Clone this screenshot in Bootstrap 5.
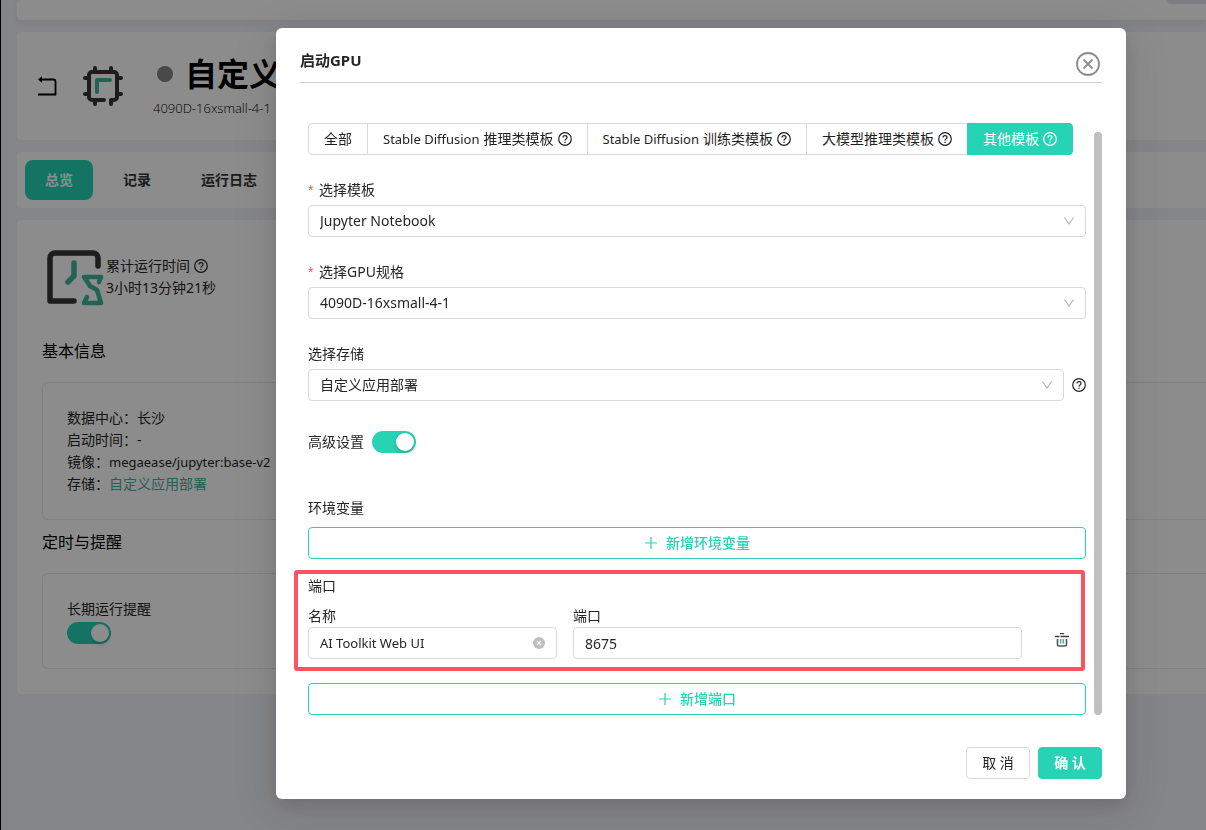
<!DOCTYPE html>
<html lang="zh-CN">
<head>
<meta charset="utf-8">
<meta name="viewport" content="width=device-width, initial-scale=1">
<title>启动GPU</title>
<link href="https://cdn.jsdelivr.net/npm/bootstrap@5.3.0/dist/css/bootstrap.min.css" rel="stylesheet">
<style>
:root { --brand: #26d3b5; --line: #d9d9d9; --ink: #262626; }
body { font-family: "Noto Sans", "Noto Sans CJK SC", sans-serif; font-size: 14px; line-height: 22px; color: var(--ink); background: #f1f2f8; overflow: hidden; }
button, input, select { font-family: inherit; }
svg { flex: none; }
.latin { font-size: 13px; }
.page { min-height: 100vh; border-left: 1px solid #000; padding-left: 16px; gap: 12px; }
.panel { background: #fff; border-radius: 4px 0 0 4px; }
.topbar { height: 20px; box-shadow: 0 2px 6px rgba(0,20,80,.06); }
.topbar-chip { width: 39px; height: 4px; background: #e6e6ea; border-bottom-left-radius: 4px; }
.hero { height: 108px; padding-left: 20px; }
.hero h1 { font-size: 32px; line-height: 44px; font-weight: 700; color: #000; }
.hero-name { gap: 12px; }
.hero-sub { font-family: "Open Sans", sans-serif; font-weight: 300; color: #000; font-size: 13px; line-height: 24px; }
.state-dot { width: 16px; height: 16px; border-radius: 50%; background: #858585; }
.tabs-row { padding: 8px; gap: 10px; }
.tab-btn { height: 40px; padding: 0 20px; border: 0; border-radius: 8px; font-size: 14px; font-weight: 700; background: none; color: #333; }
.tab-btn.current { background: var(--brand); color: #fff; }
.overview { padding: 30px 0 25px 25px; }
.overview h2 { font-size: 16px; line-height: 24px; font-weight: 400; color: #000; margin: 0 0 19px; }
.runtime { padding-left: 4px; margin-bottom: 33px; }
.runtime-text { padding-bottom: 2px; }
.info-box { border: 1px solid #e8e8e8; border-right: 0; border-radius: 6px 0 0 6px; padding: 24px; }
.overview .info-box + h2 { padding-top: 10px; }
.info-box .toggle { margin-top: 2px; }
.text-brand { color: #41b49c; }
.shade { background: rgba(0,0,0,.45); z-index: 1050; }
.gpu-dialog { max-width: 850px; margin: 28px 80px 28px auto; }
.gpu-dialog .modal-content { border: 0; border-radius: 6px; color: var(--ink); box-shadow: 0 6px 16px rgba(0,0,0,.12), 0 9px 48px 12px rgba(0,0,0,.08); }
.gpu-head { margin: 0 24px; height: 55px; padding: 10px 0 0; border-color: #d0d0d0; border-radius: 0; }
.gpu-head h2 { font-size: 15px; line-height: 24px; font-weight: 700; }
.close-btn { padding: 0; border: 0; background: none; line-height: 0; margin: 8px 2px 0 0; color: #8c8c8c; }
.gpu-body { padding: 40px 24px 0 32px; gap: 8px; }
.scroll-thumb { width: 8px; flex: none; margin-top: 9px; background: #bfbfbf; border-radius: 4px; }
.type-btn { height: 32px; padding: 0 15px; border: 1px solid var(--line); background: #fff; font-size: 14px; line-height: 22px; color: #1f1f1f; display: inline-flex; align-items: center; gap: 4px; white-space: nowrap; }
.type-btn + .type-btn { margin-left: -1px; }
.type-btn:first-child { border-radius: 4px 0 0 4px; }
.type-btn:last-child { border-radius: 0 4px 4px 0; background: var(--brand); border-color: var(--brand); color: #fff; }
.field-block { margin-top: 24px; }
.field-block label { display: block; margin-bottom: 4px; }
.req { display: inline-block; width: 11px; color: #ff4d4f; font-family: "Liberation Sans", sans-serif; }
.gpu-body .form-select, .gpu-body .form-control { height: 32px; padding: 4px 11px; font-size: 14px; line-height: 22px; border: 1px solid var(--line); border-radius: 4px; color: var(--ink); }
.gpu-body .form-control.latin { font-size: 13px; }
.gpu-body .form-select { background-image: url("data:image/svg+xml,%3Csvg xmlns='http://www.w3.org/2000/svg' viewBox='0 0 12 12' fill='none' stroke='%23b4b4b4' stroke-width='1.200'%3E%3Cpath d='M1.500 2.500 6 9l4.500-6.500'/%3E%3C/svg%3E"); background-size: 12px 12px; background-position: right 10px center; }
.toggle { appearance: none; width: 44px; height: 22px; border-radius: 11px; background: var(--brand); margin: 0; flex: none; display: block; position: relative; }
.toggle::after { content: ""; position: absolute; top: 2px; right: 2px; width: 18px; height: 18px; border-radius: 50%; background: #fff; box-shadow: 0 2px 4px rgba(0,35,11,.2); }
.advanced { margin-top: 30px; }
.env-block { margin-top: 44px; }
.add-btn { width: 100%; height: 32px; border: 1px solid var(--brand); border-radius: 4px; background: #fff; color: var(--brand); font-size: 14px; font-weight: 500; gap: 8px; padding: 0; }
.port-group { margin: 11px 0 12px; padding: 5px 0 12px; }
.port-frame { inset: 0 1px 0 -14px; border: 4px solid #ff5263; border-radius: 3px; pointer-events: none; }
.name-col { flex: 249 1 0; }
.port-col { flex: 449 1 0; }
.trash-btn { width: 48px; height: 32px; padding: 0 0 6px; border: 0; background: none; text-align: center; line-height: 0; }
.clear-btn { right: 12px; top: 10px; padding: 0; border: 0; background: none; line-height: 0; }
.gpu-foot { padding: 32px 24px 20px; gap: 8px; }
.foot-btn { width: 64px; height: 32px; padding: 0; font-size: 14px; border: 1px solid var(--line); border-radius: 4px; background: #fff; color: var(--ink); }
.foot-btn.ok { background: var(--brand); border-color: var(--brand); color: #fff; font-weight: 700; }
</style>
</head>
<body>
<svg width="0" height="0" class="position-absolute" aria-hidden="true">
  <symbol id="ask" viewBox="0 0 14 14"><g fill="none" stroke="currentColor" stroke-width="1.200"><circle cx="7" cy="7" r="6.300"/><path d="M5 5.600C5 4.300 5.900 3.700 7 3.700s2 .7 2 1.800c0 1.500-2 1.500-2 3" /></g><circle cx="7" cy="10.200" r=".75" fill="currentColor"/></symbol>
  <symbol id="plus" viewBox="0 0 14 14"><path d="M7 1v12M1 7h12" stroke="currentColor" stroke-width="1.200"/></symbol>
</svg>

<main class="page d-flex flex-column">
  <div class="panel topbar d-flex justify-content-end"><div class="topbar-chip"></div></div>
  <header class="panel hero d-flex align-items-center">
    <svg width="20" height="20" viewBox="0 0 20 20" fill="none" stroke="#000" stroke-width="1.800"><path d="M3 3.500h13.500a2 2 0 0 1 2 2V18.500H1"/><path d="M1 3.500 5 .3v6.400z" fill="#000" stroke="none"/></svg>
    <svg class="ms-4" width="44" height="44" viewBox="0 0 44 44" fill="none" stroke="#363636" stroke-width="4" stroke-linecap="round" stroke-linejoin="round"><path d="M23 36H11a3 3 0 0 1-3-3V11a3 3 0 0 1 3-3h22a3 3 0 0 1 3 3v22a3 3 0 0 1-3 3h-3"/><path d="M14 7V4M30 7V4M14 37v3M30 37v3M7 14H4M7 30H4M37 14h3M37 30h3"/><path d="M16 28V16h13" stroke="#41b49c"/></svg>
    <div class="ms-4 ps-1">
      <div class="hero-name d-flex align-items-center text-nowrap ps-1"><span class="state-dot"></span><h1 class="m-0">自定义</h1></div>
      <div class="hero-sub">4090D-16xsmall-4-1</div>
    </div>
  </header>
  <nav class="panel tabs-row d-flex">
    <button class="tab-btn current">总览</button>
    <button class="tab-btn">记录</button>
    <button class="tab-btn">运行日志</button>
  </nav>
  <section class="panel overview">
    <div class="runtime d-flex align-items-center">
      <svg width="60" height="56" viewBox="0 0 60 56" fill="none" stroke-linecap="round" stroke-linejoin="round"><path d="M52 16V8a5 5 0 0 0-5-5H9a5 5 0 0 0-5 5v43h24" stroke="#363636" stroke-width="5.500"/><g stroke="#41b49c"><path d="M28 13v13l-6 6" stroke-width="5.500"/><path d="M53 32l2-5H38l6 9 7 4 4 13H38l3-6" stroke-width="4.600"/></g></svg>
      <div class="runtime-text">
        <div class="d-flex align-items-center gap-1">累计运行时间 <svg width="14" height="14"><use href="#ask"/></svg></div>
        <div>3小时13分钟21秒</div>
      </div>
    </div>
    <h2>基本信息</h2>
    <div class="info-box">
      <div>数据中心：长沙</div>
      <div>启动时间：-</div>
      <div>镜像：<span class="latin">megaease/jupyter:base-v2</span></div>
      <div>存储：<a href="#" class="text-brand text-decoration-none">自定义应用部署</a></div>
    </div>
    <h2>定时与提醒</h2>
    <div class="info-box">
      <label for="remind" class="d-block">长期运行提醒</label>
      <input id="remind" class="toggle" type="checkbox" role="switch" checked>
    </div>
  </section>
</main>

<div class="modal d-block shade" tabindex="-1" role="dialog" aria-labelledby="dlgTitle">
  <div class="modal-dialog gpu-dialog">
    <div class="modal-content">
      <div class="modal-header gpu-head">
        <h2 id="dlgTitle" class="m-0">启动GPU</h2>
        <button class="close-btn" aria-label="关闭"><svg width="24" height="24" viewBox="0 0 24 24" fill="none" stroke="currentColor" stroke-width="1.800"><circle cx="12" cy="12" r="11"/><path d="M7.500 7.500l9 9M16.500 7.500l-9 9"/></svg></button>
      </div>
      <div class="gpu-body d-flex">
        <form class="flex-grow-1" id="gpuForm">
          <div class="d-flex" role="group" aria-label="模板类型">
            <button type="button" class="type-btn">全部</button>
            <button type="button" class="type-btn"><span class="latin">Stable Diffusion</span><span>推理类模板</span><svg width="14" height="14"><use href="#ask"/></svg></button>
            <button type="button" class="type-btn"><span class="latin">Stable Diffusion</span><span>训练类模板</span><svg width="14" height="14"><use href="#ask"/></svg></button>
            <button type="button" class="type-btn">大模型推理类模板<svg width="14" height="14"><use href="#ask"/></svg></button>
            <button type="button" class="type-btn">其他模板<svg width="14" height="14"><use href="#ask"/></svg></button>
          </div>
          <div class="field-block">
            <label for="tpl"><span class="req">*</span>选择模板</label>
            <select id="tpl" class="form-select"><option>Jupyter Notebook</option></select>
          </div>
          <div class="field-block">
            <label for="spec"><span class="req">*</span>选择GPU规格</label>
            <select id="spec" class="form-select"><option>4090D-16xsmall-4-1</option></select>
          </div>
          <div class="field-block">
            <label for="store">选择存储</label>
            <div class="d-flex align-items-center gap-2">
              <select id="store" class="form-select"><option>自定义应用部署</option></select>
              <svg width="14" height="14"><use href="#ask"/></svg>
            </div>
          </div>
          <div class="advanced d-flex align-items-center gap-2">
            <label for="adv">高级设置</label>
            <input id="adv" class="toggle" type="checkbox" role="switch" checked>
          </div>
          <div class="env-block">
            <div class="mb-2">环境变量</div>
            <button type="button" class="add-btn d-flex align-items-center justify-content-center"><svg width="14" height="14"><use href="#plus"/></svg>新增环境变量</button>
          </div>
          <div class="port-group position-relative">
            <div class="port-frame position-absolute"></div>
            <div class="mb-2">端口</div>
            <div class="d-flex align-items-end gap-3">
              <div class="name-col">
                <label for="pname" class="d-block">名称</label>
                <div class="position-relative">
                  <input id="pname" class="form-control latin" type="text" value="AI Toolkit Web UI">
                  <button type="button" class="clear-btn position-absolute" aria-label="清除"><svg width="12" height="12" viewBox="0 0 12 12"><circle cx="6" cy="6" r="6" fill="#bfbfbf"/><path d="M4 4l4 4M8 4L4 8" stroke="#fff" stroke-width="1.100"/></svg></button>
                </div>
              </div>
              <div class="port-col">
                <label for="pnum" class="d-block">端口</label>
                <input id="pnum" class="form-control" type="text" value="8675">
              </div>
              <button type="button" class="trash-btn" aria-label="删除"><svg width="14" height="14" viewBox="0 0 14 14" fill="none"><path d="M0 3.500h4.500M5.500 3.500h8.500M5 .7h4" stroke="#404040" stroke-width="1.300"/><path d="M2.500 6v5.500a1.500 1.500 0 0 0 1.500 1.500h6a1.500 1.500 0 0 0 1.500-1.500V6" stroke="#555" stroke-width="1.600"/><path d="M5.700 6v4.500M8.300 6v4.500" stroke="#41b49c" stroke-width="1.500"/></svg></button>
            </div>
          </div>
          <button type="button" class="add-btn d-flex align-items-center justify-content-center"><svg width="14" height="14"><use href="#plus"/></svg>新增端口</button>
        </form>
        <div class="scroll-thumb"></div>
      </div>
      <div class="gpu-foot d-flex justify-content-end">
        <button type="button" class="foot-btn">取 消</button>
        <button type="submit" form="gpuForm" class="foot-btn ok">确 认</button>
      </div>
    </div>
  </div>
</div>
<script src="https://cdn.jsdelivr.net/npm/bootstrap@5.3.0/dist/js/bootstrap.bundle.min.js"></script>
</body>
</html>
